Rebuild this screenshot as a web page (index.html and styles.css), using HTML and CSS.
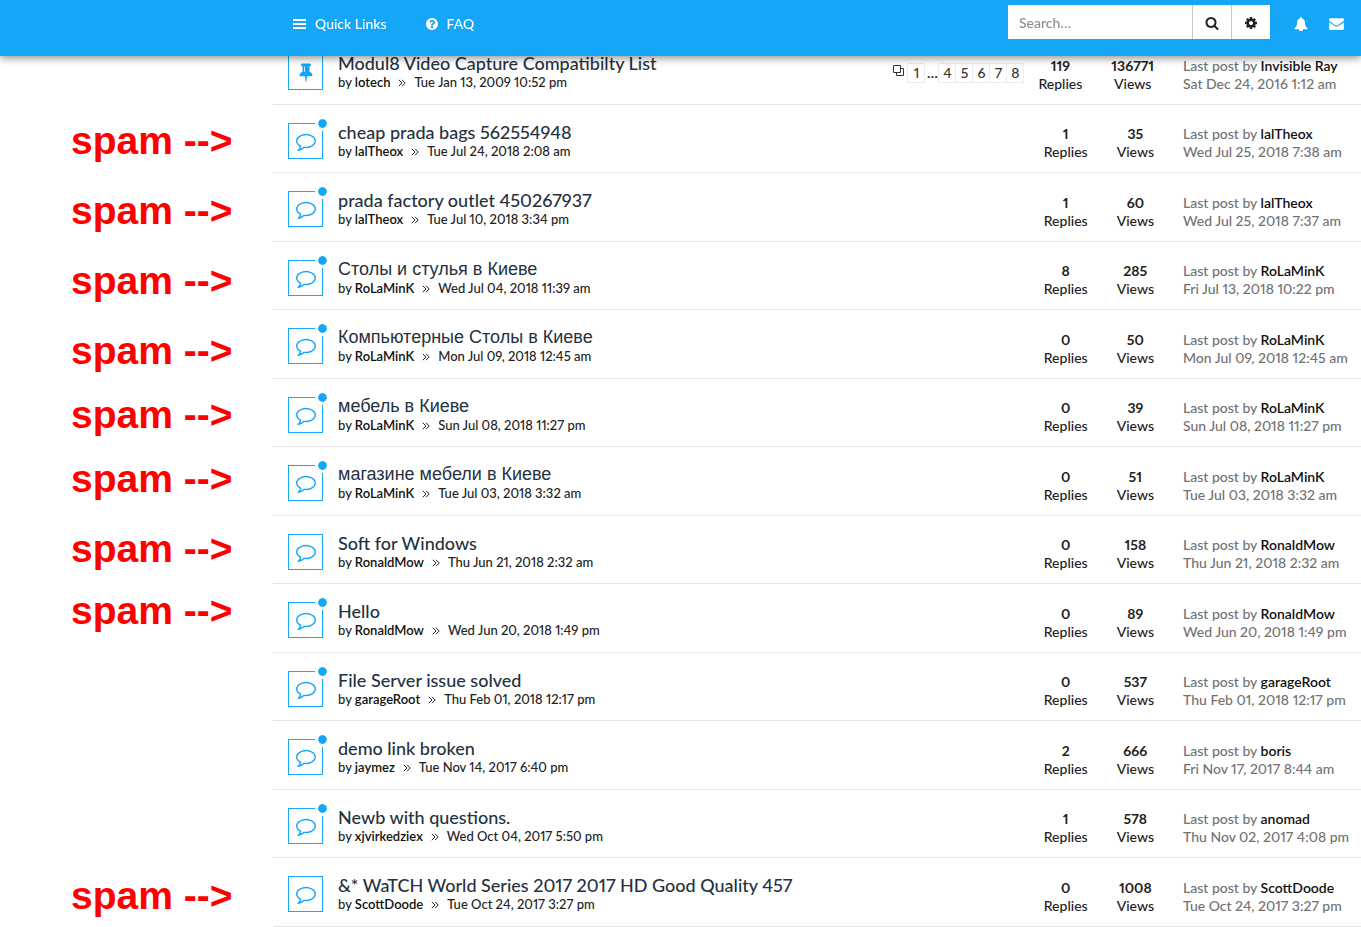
FILE: index.html
```
<!DOCTYPE html>
<html lang="en">
<head>
<meta charset="utf-8">
<title>Forum topics</title>
<link rel="stylesheet" href="styles.css">
</head>
<body>
<svg class="sprite" aria-hidden="true">
  <symbol id="i-comment" viewBox="0 0 1792 1792"><path d="M896 384q-204 0-381.500 69.500t-282 187.500-104.500 255q0 112 71.500 213.500t201.500 175.500l87 50-27 96q-24 91-70 172 152-63 275-171l43-38 57 6q69 8 130 8 204 0 381.500-69.500t282-187.500 104.500-255-104.500-255-282-187.500-381.500-69.500zm896 512q0 174-120 321.500t-326 233-450 85.500q-70 0-145-8-198 175-460 242-49 14-114 22h-5q-15 0-27-10.500t-16-27.500v-1q-3-4-.5-12t2-10 4.500-9.500l6-9 7-8.500 8-9q7-8 31-34.500t34.500-38 31-39.500 32.500-51 27-59 26-76q-157-89-247.500-220t-90.500-281q0-130 71-248.500t191-204.500 286-136.500 348-50.500 348 50.500 286 136.500 191 204.500 71 248.500z"/></symbol>
  <symbol id="i-pin" viewBox="0 0 1792 1792"><path d="M800 864v-448q0-14-9-23t-23-9-23 9-9 23v448q0 14 9 23t23 9 23-9 9-23zm672 352q0 26-19 45t-45 19h-429l-51 483q-2 12-10.500 20.500t-20.500 8.500h-1q-27 0-32-27l-76-485h-404q-26 0-45-19t-19-45q0-123 78.500-221.500t177.500-98.500v-512q-52 0-90-38t-38-90 38-90 90-38h640q52 0 90 38t38 90-38 90-90 38v512q99 0 177.500 98.500t78.500 221.500z"/></symbol>
  <symbol id="i-raquo" viewBox="0 0 8 8"><path d="M.8.8 4 4 .8 7.200M4 .8 7.200 4 4 7.200" fill="none" stroke="currentColor"/></symbol>
</svg>

<header class="topbar">
  <nav class="menu">
    <a href="#"><svg class="icon" viewBox="0 0 14 14" aria-hidden="true"><path d="M0 2h13v2H0zM0 6h13v2H0zM0 10h13v2H0z"/></svg>Quick Links</a>
    <a href="#"><svg class="icon" viewBox="0 0 1792 1792" aria-hidden="true"><path d="M1024 1376v-192q0-14-9-23t-23-9h-192q-14 0-23 9t-9 23v192q0 14 9 23t23 9h192q14 0 23-9t9-23zm256-672q0-88-55.500-163t-138.500-116-170-41q-243 0-371 213-15 24 8 42l132 100q7 6 19 6 16 0 25-12 53-68 86-92 34-24 86-24 48 0 85.500 26t37.500 59q0 38-20 61t-68 45q-63 28-115.500 86.500t-52.500 125.500v36q0 14 9 23t23 9h192q14 0 23-9t9-23q0-19 21.500-49.500t54.500-49.500q32-18 49-28.500t46-35 44.500-48 28-60.500 12.500-81zm384 192q0 209-103 385.500t-279.500 279.500-385.500 103-385.500-103-279.500-279.500-103-385.500 103-385.500 279.500-279.500 385.500-103 385.500 103 279.500 279.500 103 385.500z"/></svg>FAQ</a>
  </nav>
  <form class="search">
    <input type="search" placeholder="Search…" aria-label="Search">
    <button type="button" aria-label="Search"><svg class="icon" viewBox="0 0 1792 1792" aria-hidden="true"><path d="M1216 832q0-185-131.500-316.500t-316.500-131.500-316.500 131.500-131.500 316.500 131.500 316.500 316.500 131.500 316.500-131.500 131.500-316.500zm512 832q0 52-38 90t-90 38q-54 0-90-38l-343-342q-179 124-399 124-143 0-273.500-55.500t-225-150-150-225-55.500-273.500 55.500-273.500 150-225 225-150 273.500-55.500 273.500 55.500 225 150 150 225 55.500 273.500q0 220-124 399l343 343q37 37 37 90z"/></svg></button>
    <button type="button" aria-label="Advanced search"><svg class="icon" viewBox="0 0 1792 1792" aria-hidden="true"><path d="M1152 896q0-106-75-181t-181-75-181 75-75 181 75 181 181 75 181-75 75-181zm512-109v222q0 12-8 23t-20 13l-185 28q-19 54-39 91 35 50 107 138 10 12 10 25t-9 23q-27 37-99 108t-94 71q-12 0-26-9l-138-108q-44 23-91 38-16 136-29 186-7 28-36 28h-222q-14 0-24.500-8.500t-11.500-21.500l-28-184q-49-16-90-37l-141 107q-10 9-25 9-14 0-25-11-126-114-165-168-7-10-7-23 0-12 8-23 15-21 51-66.500t54-70.500q-27-50-41-99l-183-27q-13-2-21-12.500t-8-23.500v-222q0-12 8-23t19-13l186-28q14-46 39-92-40-57-107-138-10-12-10-24 0-10 9-23 26-36 98.500-107.500t94.500-71.500q13 0 26 10l138 107q44-23 91-38 16-136 29-186 7-28 36-28h222q14 0 24.500 8.500t11.500 21.500l28 184q49 16 90 37l142-107q9-9 24-9 13 0 25 10 129 119 165 170 7 8 7 22 0 12-8 23-15 21-51 66.500t-54 70.500q26 50 41 98l183 28q13 2 21 12.500t8 23.500z"/></svg></button>
  </form>
  <div class="alerts">
    <a href="#" aria-label="Notifications"><svg class="icon" viewBox="0 0 14 14" aria-hidden="true"><path d="M7 0a1 1 0 0 1 1 1v.4c1.900.5 2.900 2 2.900 4 0 3.200.8 4.400 2.600 5.900a.6.6 0 0 1-.4 1H9a2 2 0 0 1-4 0H.9a.6.6 0 0 1-.4-1C2.300 9.800 3.100 8.600 3.100 5.400c0-2 1-3.500 2.900-4V1a1 1 0 0 1 1-1z"/></svg></a>
    <a href="#" aria-label="Messages"><svg class="icon icon-mail" viewBox="0 0 1792 1792" aria-hidden="true"><path d="M1792 710v794q0 66-47 113t-113 47h-1472q-66 0-113-47t-47-113v-794q44 49 101 87 362 246 497 345 57 42 92.500 65.500t94.500 48 110 24.500h2q51 0 110-24.500t94.500-48 92.500-65.500q170-123 498-345 57-39 100-87zm0-294q0 79-49 151t-122 123q-376 261-468 325-10 7-42.500 31t-54 38-52 31.500-57.500 27-50 9h-2q-23 0-50-9t-57.500-27-52-31.500-54-38-42.500-31q-91-64-262-182.500t-205-142.500q-62-42-117-115.500t-55-136.500q0-78 41.500-130t118.500-52h1472q65 0 112.500 47t47.500 113z"/></svg></a>
  </div>
</header>

<div class="page">
  <aside class="notes">
    <p>spam --&gt;</p>
    <p class="wide">spam --&gt;</p>
    <p class="wide">spam --&gt;</p>
    <p class="wide">spam --&gt;</p>
    <p class="near">spam --&gt;</p>
    <p class="near">spam --&gt;</p>
    <p class="wide">spam --&gt;</p>
    <p>spam --&gt;</p>
    <p class="far">spam --&gt;</p>
  </aside>

  <main class="topics">
    <article class="topic">
      <span class="badge"><svg aria-hidden="true"><use href="#i-pin"/></svg></span>
      <div class="info"><a class="title" href="#">Modul8 Video Capture Compatibilty List</a><p class="by">by <a href="#">lotech</a><svg class="sep" aria-hidden="true"><use href="#i-raquo"/></svg>Tue Jan 13, 2009 10:52 pm</p></div>
      <nav class="pages" aria-label="Topic pages"><svg class="copy" viewBox="0 0 12 12" aria-hidden="true"><path d="M.5.5h7v7h-7zM7.500 3.500h3v7h-7v-3" fill="none" stroke="currentColor"/></svg><a href="#">1</a><span>…</span><a href="#">4</a><a href="#">5</a><a href="#">6</a><a href="#">7</a><a href="#">8</a></nav>
      <div class="stat"><b>119</b>Replies</div>
      <div class="stat"><b>136771</b>Views</div>
      <div class="last">Last post by <a href="#">Invisible Ray</a><br>Sat Dec 24, 2016 1:12 am</div>
    </article>
    <article class="topic">
      <span class="badge unread"><svg aria-hidden="true"><use href="#i-comment"/></svg></span>
      <div class="info"><a class="title" href="#">cheap prada bags 562554948</a><p class="by">by <a href="#">lalTheox</a><svg class="sep" aria-hidden="true"><use href="#i-raquo"/></svg>Tue Jul 24, 2018 2:08 am</p></div>
      <div class="stat"><b>1</b>Replies</div>
      <div class="stat"><b>35</b>Views</div>
      <div class="last">Last post by <a href="#">lalTheox</a><br>Wed Jul 25, 2018 7:38 am</div>
    </article>
    <article class="topic">
      <span class="badge unread"><svg aria-hidden="true"><use href="#i-comment"/></svg></span>
      <div class="info"><a class="title" href="#">prada factory outlet 450267937</a><p class="by">by <a href="#">lalTheox</a><svg class="sep" aria-hidden="true"><use href="#i-raquo"/></svg>Tue Jul 10, 2018 3:34 pm</p></div>
      <div class="stat"><b>1</b>Replies</div>
      <div class="stat"><b>60</b>Views</div>
      <div class="last">Last post by <a href="#">lalTheox</a><br>Wed Jul 25, 2018 7:37 am</div>
    </article>
    <article class="topic">
      <span class="badge unread"><svg aria-hidden="true"><use href="#i-comment"/></svg></span>
      <div class="info"><a class="title cyrillic" lang="ru" href="#">Столы и стулья в Киеве</a><p class="by">by <a href="#">RoLaMinK</a><svg class="sep" aria-hidden="true"><use href="#i-raquo"/></svg>Wed Jul 04, 2018 11:39 am</p></div>
      <div class="stat"><b>8</b>Replies</div>
      <div class="stat"><b>285</b>Views</div>
      <div class="last">Last post by <a href="#">RoLaMinK</a><br>Fri Jul 13, 2018 10:22 pm</div>
    </article>
    <article class="topic">
      <span class="badge unread"><svg aria-hidden="true"><use href="#i-comment"/></svg></span>
      <div class="info"><a class="title cyrillic" lang="ru" href="#">Компьютерные Столы в Киеве</a><p class="by">by <a href="#">RoLaMinK</a><svg class="sep" aria-hidden="true"><use href="#i-raquo"/></svg>Mon Jul 09, 2018 12:45 am</p></div>
      <div class="stat"><b>0</b>Replies</div>
      <div class="stat"><b>50</b>Views</div>
      <div class="last">Last post by <a href="#">RoLaMinK</a><br>Mon Jul 09, 2018 12:45 am</div>
    </article>
    <article class="topic">
      <span class="badge unread"><svg aria-hidden="true"><use href="#i-comment"/></svg></span>
      <div class="info"><a class="title cyrillic" lang="ru" href="#">мебель в Киеве</a><p class="by">by <a href="#">RoLaMinK</a><svg class="sep" aria-hidden="true"><use href="#i-raquo"/></svg>Sun Jul 08, 2018 11:27 pm</p></div>
      <div class="stat"><b>0</b>Replies</div>
      <div class="stat"><b>39</b>Views</div>
      <div class="last">Last post by <a href="#">RoLaMinK</a><br>Sun Jul 08, 2018 11:27 pm</div>
    </article>
    <article class="topic">
      <span class="badge unread"><svg aria-hidden="true"><use href="#i-comment"/></svg></span>
      <div class="info"><a class="title cyrillic" lang="ru" href="#">магазине мебели в Киеве</a><p class="by">by <a href="#">RoLaMinK</a><svg class="sep" aria-hidden="true"><use href="#i-raquo"/></svg>Tue Jul 03, 2018 3:32 am</p></div>
      <div class="stat"><b>0</b>Replies</div>
      <div class="stat"><b>51</b>Views</div>
      <div class="last">Last post by <a href="#">RoLaMinK</a><br>Tue Jul 03, 2018 3:32 am</div>
    </article>
    <article class="topic">
      <span class="badge"><svg aria-hidden="true"><use href="#i-comment"/></svg></span>
      <div class="info"><a class="title" href="#">Soft for Windows</a><p class="by">by <a href="#">RonaldMow</a><svg class="sep" aria-hidden="true"><use href="#i-raquo"/></svg>Thu Jun 21, 2018 2:32 am</p></div>
      <div class="stat"><b>0</b>Replies</div>
      <div class="stat"><b>158</b>Views</div>
      <div class="last">Last post by <a href="#">RonaldMow</a><br>Thu Jun 21, 2018 2:32 am</div>
    </article>
    <article class="topic">
      <span class="badge unread"><svg aria-hidden="true"><use href="#i-comment"/></svg></span>
      <div class="info"><a class="title" href="#">Hello</a><p class="by">by <a href="#">RonaldMow</a><svg class="sep" aria-hidden="true"><use href="#i-raquo"/></svg>Wed Jun 20, 2018 1:49 pm</p></div>
      <div class="stat"><b>0</b>Replies</div>
      <div class="stat"><b>89</b>Views</div>
      <div class="last">Last post by <a href="#">RonaldMow</a><br>Wed Jun 20, 2018 1:49 pm</div>
    </article>
    <article class="topic">
      <span class="badge unread"><svg aria-hidden="true"><use href="#i-comment"/></svg></span>
      <div class="info"><a class="title" href="#">File Server issue solved</a><p class="by">by <a href="#">garageRoot</a><svg class="sep" aria-hidden="true"><use href="#i-raquo"/></svg>Thu Feb 01, 2018 12:17 pm</p></div>
      <div class="stat"><b>0</b>Replies</div>
      <div class="stat"><b>537</b>Views</div>
      <div class="last">Last post by <a href="#">garageRoot</a><br>Thu Feb 01, 2018 12:17 pm</div>
    </article>
    <article class="topic">
      <span class="badge unread"><svg aria-hidden="true"><use href="#i-comment"/></svg></span>
      <div class="info"><a class="title" href="#">demo link broken</a><p class="by">by <a href="#">jaymez</a><svg class="sep" aria-hidden="true"><use href="#i-raquo"/></svg>Tue Nov 14, 2017 6:40 pm</p></div>
      <div class="stat"><b>2</b>Replies</div>
      <div class="stat"><b>666</b>Views</div>
      <div class="last">Last post by <a href="#">boris</a><br>Fri Nov 17, 2017 8:44 am</div>
    </article>
    <article class="topic">
      <span class="badge unread"><svg aria-hidden="true"><use href="#i-comment"/></svg></span>
      <div class="info"><a class="title" href="#">Newb with questions.</a><p class="by">by <a href="#">xjvirkedziex</a><svg class="sep" aria-hidden="true"><use href="#i-raquo"/></svg>Wed Oct 04, 2017 5:50 pm</p></div>
      <div class="stat"><b>1</b>Replies</div>
      <div class="stat"><b>578</b>Views</div>
      <div class="last">Last post by <a href="#">anomad</a><br>Thu Nov 02, 2017 4:08 pm</div>
    </article>
    <article class="topic">
      <span class="badge"><svg aria-hidden="true"><use href="#i-comment"/></svg></span>
      <div class="info"><a class="title" href="#">&amp;* WaTCH World Series 2017 2017 HD Good Quality 457</a><p class="by">by <a href="#">ScottDoode</a><svg class="sep" aria-hidden="true"><use href="#i-raquo"/></svg>Tue Oct 24, 2017 3:27 pm</p></div>
      <div class="stat"><b>0</b>Replies</div>
      <div class="stat"><b>1008</b>Views</div>
      <div class="last">Last post by <a href="#">ScottDoode</a><br>Tue Oct 24, 2017 3:27 pm</div>
    </article>
  </main>
</div>
</body>
</html>
```
FILE: styles.css
```
*, *::after { box-sizing: border-box; }
body {
  margin: 0; background: #fff; color: #222;
  font: 500 14px/18px Lato, "Liberation Sans", sans-serif;
  font-variant-numeric: proportional-nums;
}
a { color: inherit; text-decoration: none; }
p { margin: 0; }
.sprite { position: absolute; width: 0; height: 0; }
.icon { width: 14px; height: 14px; fill: currentColor; flex: none; }

.topbar {
  position: fixed; top: 0; left: 0; right: 0; z-index: 2;
  display: flex; align-items: flex-start;
  height: 56px; padding: 5px 17px 0 293px;
  background: #15a6f8; color: #fff;
  box-shadow: 0 2px 8px rgba(0, 0, 0, .45);
}
.menu { display: flex; flex: 1; gap: 38px; padding-top: 10px; }
.menu a { display: flex; align-items: center; gap: 8px; }
.search { display: flex; height: 34px; background: #fff; color: #222; }
.search input {
  width: 184px; padding: 2px 11px 0; border: 0; background: #fff; color: #222;
  font: inherit; outline: 0; appearance: none;
}
.search input::placeholder { color: #8c8c8c; opacity: 1; }
.search button {
  display: flex; align-items: center; justify-content: center;
  width: 39px; padding: 2px 0 0; border: 0; border-left: 1px solid #c7c7c7;
  background: #fff; color: #222;
}
.alerts { display: flex; align-items: center; gap: 21px; padding: 11px 0 0 24px; }
.alerts a { display: flex; }
.icon-mail { width: 15px; height: 15px; }

.page { display: flex; padding-top: 36px; }
.notes {
  flex: none; width: 273px; padding: 74px 0 0 71px;
  color: #f00; font: bold 39px/62px "Liberation Sans", Arial, sans-serif; white-space: nowrap;
}
.notes .near { margin-top: 2px; }
.notes .wide { margin-top: 8px; }
.notes .far { margin-top: 224px; line-height: 60px; }

.topics { flex: 1; min-width: 0; }
.topic {
  display: flex; align-items: flex-start;
  min-height: 69px; padding: 18px 0 0 15px;
  border-bottom: 1px solid #e6e6e6;
}
.badge {
  position: relative; flex: none;
  display: flex; align-items: center; justify-content: center;
  width: 35px; height: 36px; margin-right: 15px;
  border: 1px solid #15a6f8; color: #15a6f8;
}
.badge svg { width: 20px; height: 20px; fill: currentColor; }
.unread::after {
  content: ""; position: absolute; top: -8px; right: -8px;
  width: 15px; height: 15px; border: 3px solid #fff; border-radius: 50%;
  background: #15a6f8; background-clip: padding-box;
}
.info { flex: 1; min-width: 0; }
.title { display: block; color: #24323f; font-size: 18px; line-height: 18px; }
.cyrillic { font-family: "Liberation Sans", Arial, sans-serif; font-weight: 400; }
.by { font-size: 13px; line-height: 20px; }
.by a, .last a { color: #111; font-weight: 600; }
.sep { width: 8px; height: 8px; margin: 0 8px; }
.pages {
  display: flex; align-items: center; margin: 9px 14px 0 0;
  color: #333; line-height: 18px;
}
.pages a { width: 18px; margin-left: -1px; border: 1px solid #ececec; text-align: center; }
.pages span { width: 14px; font-weight: 700; text-align: center; }
.copy { width: 12px; height: 12px; margin: 0 3px 4px 0; }
.stat, .last { padding-top: 3px; }
.stat { margin-right: 29px; text-align: center; }
.stat b { display: block; }
.last { flex: none; width: 178px; color: #727272; }

.topic:nth-child(even) { min-height: 68px; }
.topic:nth-child(even) .stat, .topic:nth-child(even) .last { padding-top: 2px; }
```
